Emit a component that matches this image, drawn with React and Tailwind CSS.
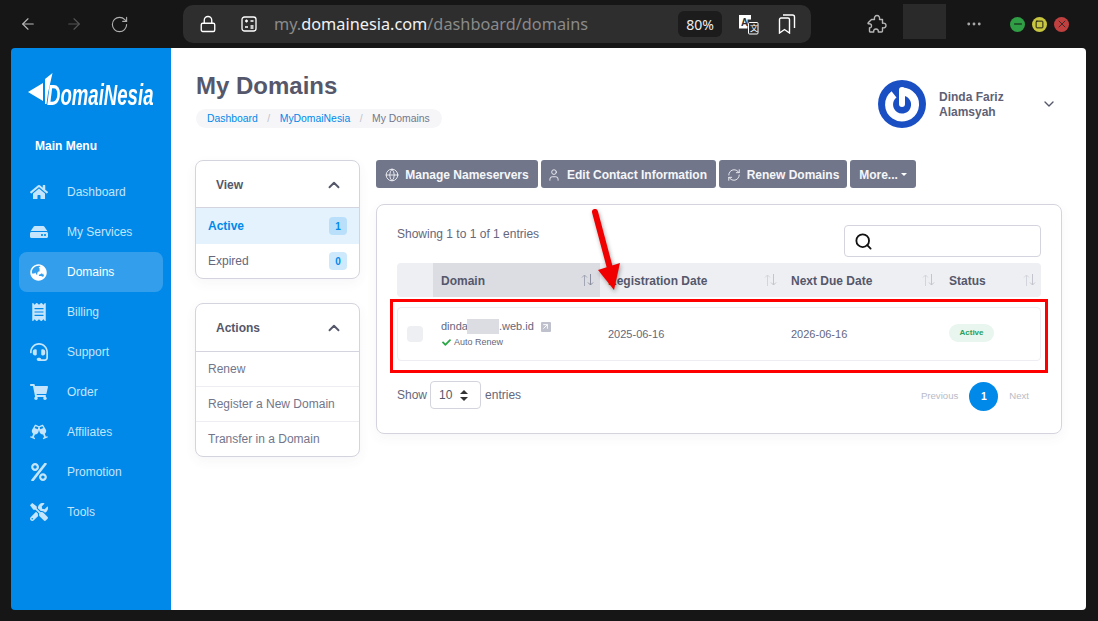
import { ArrowLeft, ArrowRight, RotateCw, Lock, Ellipsis, ChevronUp, ChevronDown, Globe, User, RefreshCw, Search, Minus, Square, X, ArrowUpRight } from "lucide-react";
import { FaHome, FaHdd, FaGlobeAsia, FaReceipt, FaHeadset, FaShoppingCart, FaGlassCheers, FaPercent, FaTools, FaCheck } from "react-icons/fa";

const menu = [
  { label: "Dashboard", icon: FaHome },
  { label: "My Services", icon: FaHdd },
  { label: "Domains", icon: FaGlobeAsia, active: true },
  { label: "Billing", icon: FaReceipt },
  { label: "Support", icon: FaHeadset },
  { label: "Order", icon: FaShoppingCart },
  { label: "Affiliates", icon: FaGlassCheers },
  { label: "Promotion", icon: FaPercent },
  { label: "Tools", icon: FaTools },
];

function SortArrows({ dark }) {
  return (
    <svg width="13" height="14" viewBox="0 0 13 14" fill="none" stroke={dark ? "#a3a6b4" : "#d3d5dc"} strokeWidth="1" className="shrink-0">
      <path d="M3.500 13V2M1 4.500 3.500 2 6 4.500" />
      <path d="M9.500 1v11M7 9.500 9.500 12 12 9.500" stroke={dark ? "#8b8e9e" : "#c3c5ce"} />
    </svg>
  );
}

function TranslateIcon() {
  return (
    <svg width="21" height="21" viewBox="0 0 21 21" className="shrink-0">
      <path d="M1 1h12v4.500H9.500v9H1z" fill="white" />
      <text x="3" y="12" fontSize="10" fontWeight="700" fill="#2e2e2e" fontFamily="Liberation Sans, sans-serif">A</text>
      <rect x="10.500" y="8.500" width="9.500" height="11.500" rx="1" fill="#2e2e2e" stroke="white" strokeWidth="1" />
      <text x="12" y="17" fontSize="8" fill="white" fontFamily="Noto Sans CJK SC, sans-serif">文</text>
    </svg>
  );
}

function BookmarksIcon() {
  return (
    <svg width="18" height="20" viewBox="0 0 18 20" fill="none" stroke="white" strokeWidth="1.400" className="shrink-0">
      <path d="M1.500 5.500a1.500 1.500 0 0 1 1.500-1.500h7a1.500 1.500 0 0 1 1.500 1.500V19l-5-3.500-5 3.500z" />
      <path d="M5 1h9.500A2 2 0 0 1 16.500 3v11" />
    </svg>
  );
}

function PuzzleIcon() {
  return (
    <svg width="20" height="20" viewBox="0 0 20 20" fill="none" stroke="#b5b5b5" strokeWidth="1.400" strokeLinejoin="round" className="shrink-0 ml-[56px]">
      <path d="M4.500 5.500H7.500C7 3 8.200 1.500 10 1.500S13 3 12.500 5.500h3v3.700c2.300-.4 3.500.6 3.500 2.300s-1.200 2.700-3.500 2.300v3.200c0 .7-.5 1-1 1h-3.200c.3-2-.7-3-2.300-3s-2.600 1-2.300 3H3.500c-.7 0-1-.4-1-1v-3.200c1.300.2 2-.7 2-2s-.7-2-2.500-2c-1 0-1.200-.3-.8-1z" />
    </svg>
  );
}

function TopBar() {
  return (
    <div className="h-12 shrink-0 flex items-center text-white">
      <ArrowLeft className="w-[18px] h-[18px] ml-[19px] text-[#b9b9b9]" strokeWidth={1.5} />
      <ArrowRight className="w-[18px] h-[18px] ml-[28px] text-[#555555]" strokeWidth={1.5} />
      <RotateCw className="w-[19px] h-[19px] ml-[27px] text-[#b0b0b0]" strokeWidth={1.4} />
      <div className="ml-[54px] w-[628px] h-[38px] rounded-[10px] bg-[#2e2e2e] flex items-center">
        <Lock className="w-[18px] h-[18px] ml-4 text-white" strokeWidth={1.8} />
        <svg width="16" height="16" viewBox="0 0 16 16" fill="none" stroke="white" strokeWidth="1.300" className="ml-[24px]">
          <rect x="1" y="1" width="14" height="14" rx="2.500" />
          <path d="M4 5h3M5.500 3.500v3M4 11h3M9.500 5h3M9.500 10h3M9.500 12h3" />
        </svg>
        <div className="ml-[17px] text-[16.300px] text-[#8a8a8a] whitespace-nowrap" style={{ fontFamily: '"Noto Sans", sans-serif' }}>
          my.<span className="text-[#f2f2f2]">domainesia.com</span>/dashboard/domains
        </div>
        <div className="ml-auto w-11 h-[26px] rounded-md bg-[#1c1c1c] flex items-center justify-center text-[14px] text-[#eeeeee]" style={{ fontFamily: '"Noto Sans", sans-serif' }}>80%</div>
        <span className="ml-[16px]"><TranslateIcon /></span>
        <span className="ml-[19px] mr-[15px]"><BookmarksIcon /></span>
      </div>
      <PuzzleIcon />
      <div className="ml-[16px] w-[43px] h-[35px] -mt-[6px] bg-[#2a2a2a]" />
      <Ellipsis className="w-[18px] h-[18px] ml-[19px] text-[#a8a8a8]" strokeWidth={1.8} />
      <div className="ml-[27px] flex gap-[7px]">
        <div className="w-[15px] h-[15px] rounded-full bg-[#2f9e44] flex items-center justify-center"><Minus className="w-3 h-3 text-[#111111]" strokeWidth={2} /></div>
        <div className="w-[15px] h-[15px] rounded-full bg-[#c8c63f] flex items-center justify-center"><Square className="w-[9px] h-[9px] text-[#111111]" strokeWidth={2.500} /></div>
        <div className="w-[15px] h-[15px] rounded-full bg-[#c04040] flex items-center justify-center"><X className="w-3 h-3 text-[#222222]" strokeWidth={1.600} /></div>
      </div>
    </div>
  );
}

function Sidebar() {
  return (
    <aside className="w-40 shrink-0 bg-[#0089e9] px-2 flex flex-col">
      <div className="h-[94px] flex items-center pl-[9px]">
        <svg width="19" height="32" viewBox="0 0 19 32" fill="white" className="shrink-0 overflow-visible mb-[12px]">
          <path d="M0 19 15 10v18zM17 6 24.500 0 20 20 18.500 31H17z" />
        </svg>
        <span className="text-white font-bold italic text-[30px] leading-none whitespace-nowrap origin-left scale-x-[0.62] mb-[1px]">DomaiNesia</span>
      </div>
      <div className="text-white font-bold text-[12px] leading-4 pl-4 -mt-1 h-[34px]">Main Menu</div>
      <nav>
        {menu.map((m) => {
          const Icon = m.icon;
          return (
            <div key={m.label} className={`h-10 flex items-center rounded-lg ${m.active ? "bg-[#339fec] text-white" : "text-[#c4e5fb]"}`}>
              <span className="w-12 flex items-center pl-[11px]"><Icon className={m.active ? "w-[17px] h-[17px] text-white" : "w-[18px] h-[18px] text-[#c4e5fb]"} /></span>
              <span className="text-[12px]">{m.label}</span>
            </div>
          );
        })}
      </nav>
    </aside>
  );
}

function SideCard({ title, headClass, children }) {
  return (
    <div className="w-[165px] -ml-[1px] rounded-lg border border-[#d3d4dd] bg-white overflow-hidden shadow-[0_4px_12px_rgba(80,80,110,0.05)]">
      <div className={`${headClass} flex items-center justify-between pl-5 pr-4 border-b border-[#d3d4dd]`}>
        <span className="font-bold text-[12px] text-[#55576b]">{title}</span>
        <ChevronUp className="w-[18px] h-[18px] text-[#55576b]" strokeWidth={2.500} />
      </div>
      {children}
    </div>
  );
}

function Count({ n, strong }) {
  return <span className={`w-[18px] h-[18px] rounded-[4px] flex items-center justify-center text-[10px] font-bold text-[#0089e9] ${strong ? "bg-[#b9dffa]" : "bg-[#cfe9fc]"}`}>{n}</span>;
}

function ActionBtn({ icon: Icon, width, children, caret }) {
  return (
    <button className={`h-7 rounded-[3px] bg-[#72768b] text-[#f5f6f9] text-[12px] font-bold flex items-center justify-center whitespace-nowrap pt-[1px] ${width}`}>
      {Icon && <Icon className="w-[14px] h-[14px] mr-[6px]" strokeWidth={1.500} />}
      {children}
      {caret && <span className="ml-[3px] w-0 h-0 border-x-[3px] border-x-transparent border-t-[3px] border-t-white" />}
    </button>
  );
}

function Avatar() {
  return (
    <svg width="48" height="48" viewBox="0 0 48 48" fill="none" className="shrink-0">
      <circle cx="24" cy="24" r="24" fill="#1a4fc4" />
      <path d="M16 14.300A13 13 0 1 0 24 11.500" stroke="white" strokeWidth="8" />
      <path d="M24 10v14" stroke="white" strokeWidth="6" strokeLinecap="round" />
    </svg>
  );
}

function Content() {
  return (
    <main className="flex-1 min-w-0 bg-white pl-[25px] pr-6 text-[#65677c]">
      <div className="h-[112px] flex justify-between">
        <div className="pt-[22px]">
          <h1 className="text-[24px] leading-[32px] font-bold text-[#55576b]">My Domains</h1>
          <div className="mt-[7px] h-[19px] w-[246px] rounded-full bg-[#f6f6f9] flex items-center pl-[11px] text-[10.400px] whitespace-nowrap">
            <span className="text-[#0089e9]">Dashboard</span>
            <span className="mx-[9.500px] text-[#bfc1cb]">/</span>
            <span className="text-[#0089e9]">MyDomaiNesia</span>
            <span className="mx-[9.500px] text-[#bfc1cb]">/</span>
            <span className="text-[#72768b]">My Domains</span>
          </div>
        </div>
        <div className="flex items-center h-[112px]">
          <Avatar />
          <div className="ml-[13px] w-[102px] pt-[2px] text-[12px] leading-[15px] font-bold text-[#5f6175]">Dinda Fariz<br />Alamsyah</div>
          <ChevronDown className="w-4 h-4 mr-[5px] text-[#55576b]" strokeWidth={2} />
        </div>
      </div>

      <div className="flex gap-4">
        <div className="flex flex-col gap-6">
          <SideCard title="View" headClass="h-[47px] pt-[2px]">
            <div className="h-9 bg-[#e3f2fd] flex items-center justify-between px-3 font-bold text-[12px] text-[#0089e9]">Active <Count n="1" strong /></div>
            <div className="h-[34px] flex items-center justify-between px-3 text-[12px]">Expired <Count n="0" /></div>
          </SideCard>
          <SideCard title="Actions" headClass="h-[48px]">
            <div className="h-[35px] flex items-center px-3 text-[12px] text-[#72768b] border-b border-[#eeeef2]">Renew</div>
            <div className="h-[35px] flex items-center px-3 text-[12px] text-[#72768b] border-b border-[#eeeef2]">Register a New Domain</div>
            <div className="h-[34px] flex items-center px-3 text-[12px] text-[#72768b]">Transfer in a Domain</div>
          </SideCard>
        </div>

        <div className="w-[686px]">
          <div className="flex gap-[3px]">
            <ActionBtn icon={Globe} width="w-[162px]">Manage Nameservers</ActionBtn>
            <ActionBtn icon={User} width="w-[175px] pr-[3px]">Edit Contact Information</ActionBtn>
            <ActionBtn icon={RefreshCw} width="w-[128px]">Renew Domains</ActionBtn>
            <ActionBtn width="w-[66px]" caret>More...</ActionBtn>
          </div>

          <div className="mt-4 h-[230px] rounded-lg border border-[#d3d4dd] px-5 shadow-[0_4px_12px_rgba(80,80,110,0.05)]">
            <div className="h-[58px] flex items-start justify-between pt-5">
              <span className="text-[12px] leading-4 pt-[1px]">Showing 1 to 1 of 1 entries</span>
              <div className="w-[197px] h-8 rounded-[4px] border border-[#d3d4dd] flex items-center pl-[9px]">
                <Search className="w-[19px] h-[19px] text-[#111111]" strokeWidth={2.300} />
              </div>
            </div>

            <div className="h-[34px] rounded-[4px] bg-[#eeeff2] overflow-hidden flex items-center font-bold text-[12px] text-[#55576b]">
              <div className="w-9 shrink-0" />
              <div className="w-[167px] h-full bg-[#dcdde3] flex items-center justify-between pl-2 pr-[6px]"><span className="pt-[1px]">Domain</span> <SortArrows dark /></div>
              <div className="w-[183px] flex items-center justify-between pl-2 pr-[6px]"><span className="pt-[1px]">Registration Date</span> <SortArrows /></div>
              <div className="w-[158px] flex items-center justify-between pl-2 pr-[6px]"><span className="pt-[1px]">Next Due Date</span> <SortArrows /></div>
              <div className="flex-1 flex items-center justify-between pl-2 pr-[5px]"><span className="pt-[1px]">Status</span> <SortArrows /></div>
            </div>

            <div className="mt-[10px] h-[54px] rounded-[4px] border border-[#eeeef2] flex items-center text-[11px]">
              <div className="w-[35px] shrink-0 pl-[9px]"><div className="w-4 h-4 rounded-[4px] bg-[#eeeff2]" /></div>
              <div className="w-[167px] pl-2">
                <div className="flex items-center leading-[15px] whitespace-nowrap -mt-[1px]">
                  dinda<span className="w-[32px] h-[15px] -ml-[1px] bg-[#dcdde3]" />.web.id
                  <span className="ml-[7px] w-[10px] h-[10px] rounded-[1px] bg-[#bfc1cc] flex items-center justify-center"><ArrowUpRight className="w-[9px] h-[9px] text-white" strokeWidth={2.500} /></span>
                </div>
                <div className="mt-[2px] flex items-center text-[9px] leading-3 pl-[1px]"><FaCheck className="w-[9px] h-[9px] mr-[3px] text-[#28a745]" />Auto Renew</div>
              </div>
              <div className="w-[183px] pl-2">2025-06-16</div>
              <div className="w-[158px] pl-2">2026-06-16</div>
              <div className="flex-1 pl-2 -mt-[3px]">
                <span className="w-[45px] h-[18px] rounded-full bg-[#e8f6ef] flex items-center justify-center text-[8px] font-bold text-[#28a060]">Active</span>
              </div>
            </div>

            <div className="mt-[20px] flex items-start justify-between">
              <div className="flex items-center text-[12px]">
                Show
                <div className="ml-[3px] mr-[4px] w-[51px] h-7 rounded-[4px] border border-[#d3d4dd] flex items-center pl-[8px] text-[#55576b]">
                  10
                  <svg width="8" height="11" viewBox="0 0 8 11" fill="#333333" className="ml-[8px]"><path d="M4 0 8 4H0zM4 11 0 7h8z" /></svg>
                </div>
                entries
              </div>
              <div className="mt-[1px] flex items-center text-[9.600px] text-[#b9bbc7] pr-3">
                Previous
                <span className="mx-[11px] w-[29px] h-[29px] rounded-full bg-[#0089e9] text-white text-[10.400px] font-bold flex items-center justify-center">1</span>
                Next
              </div>
            </div>
          </div>
        </div>
      </div>
    </main>
  );
}

export default function App() {
  return (
    <div className="relative w-[1098px] h-[621px] overflow-hidden bg-[#161616] flex flex-col" style={{ fontFamily: '"Liberation Sans", Arial, sans-serif' }}>
      <TopBar />
      <div className="pl-[11px] pr-3">
        <div className="h-[562px] rounded-[4px] overflow-hidden flex">
          <Sidebar />
          <Content />
        </div>
      </div>
      <svg className="absolute left-[575px] top-[200px] drop-shadow-[1px_2px_2px_rgba(0,0,0,0.35)]" width="60" height="100" viewBox="0 0 60 100" fill="#f00000">
        <path d="M20 12 36 72" stroke="#f00000" strokeWidth="6" strokeLinecap="round" fill="none" />
        <path d="M23 70 45 63 39 90z" />
      </svg>
      <div className="absolute left-[390px] top-[299px] w-[658px] h-[74px] border-[3px] border-[#ff0000]" />
    </div>
  );
}
